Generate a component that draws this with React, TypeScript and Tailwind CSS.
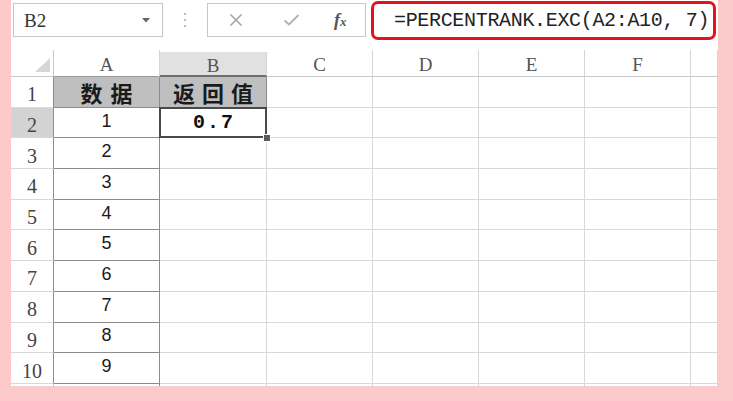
import React from "react";

const mono = { fontFamily: '"Liberation Mono", "DejaVu Sans Mono", monospace' };
const cjk = { fontFamily: '"Noto Sans CJK SC", "Noto Sans", sans-serif' };
const arial = { fontFamily: '"Liberation Sans", Arial, sans-serif' };
const serif = { fontFamily: '"Liberation Serif", "Times New Roman", serif' };

const cols = ["A", "B", "C", "D", "E", "F", ""];

function XIcon() {
  return (
    <svg width="14" height="14" viewBox="0 0 14 14">
      <path d="M1.5 1.5 L12.5 12.5 M12.5 1.5 L1.5 12.5" stroke="#a6a6a6" strokeWidth="1.6" fill="none" />
    </svg>
  );
}
function CheckIcon() {
  return (
    <svg width="17" height="14" viewBox="0 0 17 14">
      <path d="M1.5 7.5 L6 11.5 L15.5 2" stroke="#b0b0b0" strokeWidth="1.8" fill="none" />
    </svg>
  );
}

export default function App() {
  const rows = Array.from({ length: 11 }, (_, i) => i + 1);
  return (
    <div className="w-[733px] h-[401px] bg-[#fccaca] overflow-hidden">
      <div className="ml-[11px] w-[707px] h-[386px] bg-white overflow-hidden">
        {/* formula bar */}
        <div className="h-[50px] flex items-start">
          <div className="ml-[2px] mt-[3px] w-[150px] h-[34px] border border-[#c6c6c6] flex items-center justify-between pl-[10px] pr-[12px]">
            <span className="text-[19px] text-[#333] leading-none" style={serif}>B2</span>
            <svg width="8" height="5" viewBox="0 0 8 5"><path d="M0 0 L8 0 L4 4.5 Z" fill="#666" /></svg>
          </div>
          <div className="ml-[21px] mt-[13px] flex flex-col gap-[4px]">
            <div className="w-[2px] h-[2px] bg-[#bdbdbd]" />
            <div className="w-[2px] h-[2px] bg-[#bdbdbd]" />
            <div className="w-[2px] h-[2px] bg-[#bdbdbd]" />
          </div>
          <div className="ml-[21px] mt-[3px] w-[159px] h-[34px] border border-[#c6c6c6] flex items-center pl-[21px]">
            <XIcon />
            <div className="ml-[40px]"><CheckIcon /></div>
            <span className="ml-[34px] italic font-bold text-[18px] text-[#555] leading-none" style={serif}>
              f<span className="text-[13px]">x</span>
            </span>
          </div>
          <div className="ml-[5px] mt-[1px] w-[345px] h-[39px] border-[3px] border-[#e3121c] rounded-[7px] flex items-center pl-[20px]">
            <span className="text-[20px] tracking-[-0.33px] text-[#222] leading-none whitespace-nowrap" style={mono}>
              =PERCENTRANK.EXC(A2:A10, 7)
            </span>
          </div>
        </div>

        {/* grid */}
        <div className="grid grid-cols-[43px_106px_107px_106px_106px_106px_106px_27px] grid-rows-[27px_repeat(11,30.7px)]">
          {/* header row */}
          <div className="border-r border-b border-[#c8c8c8] relative">
            <svg className="absolute left-[24px] top-[8px]" width="15" height="14" viewBox="0 0 15 14">
              <path d="M15 0 L15 14 L0 14 Z" fill="#d6d6d6" />
            </svg>
          </div>
          {cols.map((c, i) => (
            <div
              key={c + i}
              className={
                "flex items-center justify-center pt-[3px] text-[19px] leading-none text-[#555] border-r border-[#d4d4d4] " +
                (i === 1
                  ? "bg-[#e1e1e1] border-b-2 border-b-[#6e6e6e] mt-[2px]"
                  : i === 0
                  ? "border-b border-b-[#9a9a9a]"
                  : "border-b border-b-[#c8c8c8]")
              }
              style={serif}
            >
              {c}
            </div>
          ))}
          {rows.map((r) => (
            <React.Fragment key={r}>
              <div
                className={
                  "flex items-center justify-center pt-[5px] text-[20px] leading-none text-[#444] border-b border-[#d8d8d8] border-r " +
                  (r <= 10 ? "border-r-[#8c8c8c] " : "border-r-[#c8c8c8] ") +
                  (r === 2 ? "bg-[#d3d3d3] text-[#222]" : "")
                }
                style={serif}
              >
                {r <= 10 ? r : ""}
              </div>
              {/* A */}
              <div
                className={
                  "flex items-center justify-center border-r border-b " +
                  (r <= 10 ? "border-[#8c8c8c] " : "border-[#d8d8d8] border-r-[#8c8c8c] ") +
                  (r === 1 ? "bg-[#bfbfbf]" : "")
                }
              >
                {r === 1 ? (
                  <span className="text-[22px] font-bold leading-none tracking-[8px] pl-[8px] text-[#1a1a1a]" style={cjk}>
                    数据
                  </span>
                ) : r <= 10 ? (
                  <span className="text-[18px] leading-none text-[#1a1a1a] -mt-[4px]" style={arial}>
                    {r - 1}
                  </span>
                ) : null}
              </div>
              {/* B */}
              <div
                className={
                  "relative flex items-center justify-center border-r border-b " +
                  (r === 1 ? "bg-[#bfbfbf] border-[#8c8c8c]" : "border-[#d8d8d8]") +
                  (r === 2 ? " z-10" : "")
                }
              >
                {r === 1 && (
                  <span className="text-[22px] font-bold leading-none tracking-[7px] pl-[7px] text-[#1a1a1a]" style={cjk}>
                    返回值
                  </span>
                )}
                {r === 2 && (
                  <>
                    <span className="text-[20px] font-bold leading-none tracking-[2px] pl-[2px] text-[#111]" style={mono}>
                      0.7
                    </span>
                    <div className="absolute -left-[1px] -top-[1px] -right-[1px] -bottom-[1px] border-2 border-[#4a4a4a]" />
                    <div className="absolute right-[-5px] bottom-[-5px] w-[8px] h-[8px] bg-[#5a5a5a] border border-white" />
                  </>
                )}
              </div>
              {[0, 1, 2, 3, 4].map((k) => (
                <div key={k} className="border-r border-b border-[#d8d8d8]" />
              ))}
            </React.Fragment>
          ))}
        </div>
      </div>
    </div>
  );
}
